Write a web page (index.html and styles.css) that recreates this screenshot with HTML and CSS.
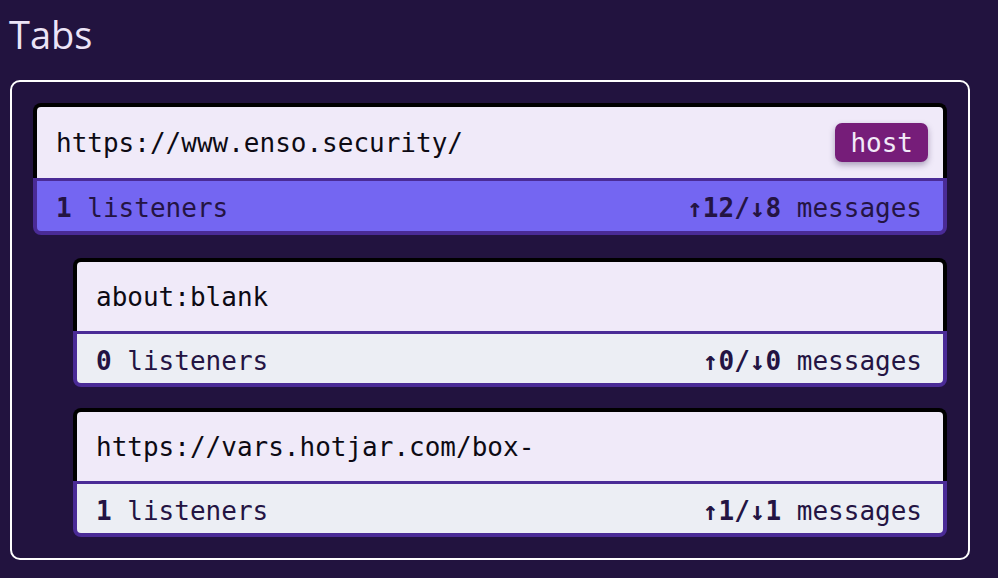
FILE: index.html
```html
<!DOCTYPE html>
<html>
<head>
<meta charset="utf-8">
<link rel="stylesheet" href="styles.css">
</head>
<body>
<h1 class="title">Tabs</h1>
<div class="tabs-box">
  <div class="card">
    <div class="card-head">
      <span class="url">https://www.enso.security/</span>
      <span class="badge">host</span>
    </div>
    <div class="card-foot active">
      <span><b>1</b> listeners</span>
      <span><b>↑12/↓8</b> messages</span>
    </div>
  </div>
  <div class="card child">
    <div class="card-head">
      <span class="url">about:blank</span>
    </div>
    <div class="card-foot">
      <span><b>0</b> listeners</span>
      <span><b>↑0/↓0</b> messages</span>
    </div>
  </div>
  <div class="card child last">
    <div class="card-head">
      <span class="url">https://vars.hotjar.com/box-</span>
    </div>
    <div class="card-foot">
      <span><b>1</b> listeners</span>
      <span><b>↑1/↓1</b> messages</span>
    </div>
  </div>
</div>
</body>
</html>
```

FILE: styles.css
```css
html, body {
  margin: 0;
  padding: 0;
  background: #22133f;
}
body {
  width: 998px;
  height: 578px;
  overflow: hidden;
}
.title {
  margin: 0;
  padding: 11px 0 0 9px;
  height: 68px;
  box-sizing: border-box;
  font-family: "Open Sans", "Lato", sans-serif;
  font-weight: 400;
  font-size: 38px;
  line-height: 46px;
  color: #ece4f7;
}
.tabs-box {
  margin-left: 10px;
  margin-top: 12px;
  width: 960px;
  box-sizing: border-box;
  border: 2px solid #ffffff;
  border-radius: 10px;
  padding: 21px;
  display: flex;
  flex-direction: column;
}
.card {
  font-family: "DejaVu Sans Mono", "Liberation Mono", monospace;
  font-size: 26px;
  display: flex;
  flex-direction: column;
}
.card.child {
  margin-left: 40px;
  margin-top: 23px;
}
.card.last {
  margin-top: 21px;
}
.card-head {
  background: #f0eaf9;
  border: 4px solid #000;
  border-bottom: 0;
  border-radius: 8px 8px 0 0;
  height: 69px;
  padding: 0 15px 0 19px;
  display: flex;
  align-items: center;
  justify-content: space-between;
  color: #0d0a14;
}
.card:first-child .card-head {
  height: 71px;
}
.badge {
  background: #761d79;
  color: #f2eaf8;
  border-radius: 7px;
  height: 39px;
  padding: 0 15px;
  display: flex;
  align-items: center;
  box-shadow: 0 3px 6px rgba(40, 20, 70, 0.35);
}
.card-foot {
  background: #eceef4;
  border: 4px solid #4a2b96;
  border-top-width: 3px;
  border-radius: 0 0 8px 8px;
  height: 45px;
  box-sizing: content-box;
  padding: 4px 21px 0 19px;
  display: flex;
  align-items: center;
  justify-content: space-between;
  color: #241443;
}
.card-foot.active {
  background: #7466f2;
  height: 46px;
}
.card-foot b {
  font-weight: 700;
}
```
